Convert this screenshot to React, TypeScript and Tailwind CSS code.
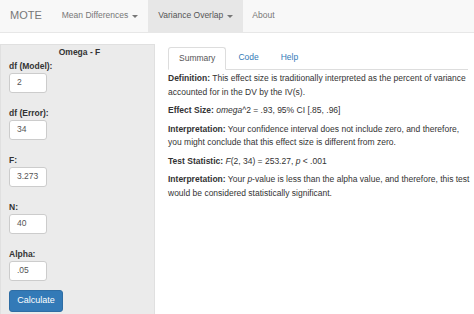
const fields = [
  { label: 'df (Model):', value: '2' },
  { label: 'df (Error):', value: '34' },
  { label: 'F:', value: '3.273' },
  { label: 'N:', value: '40' },
  { label: 'Alpha:', value: '.05' },
];

function Caret() {
  return (
    <span className="ml-[4px] inline-block h-0 w-0 border-x-[3px] border-t-[3px] border-x-transparent border-t-[#777] align-middle" />
  );
}

export default function App() {
  return (
    <div className="h-[314px] w-[474px] overflow-hidden bg-white text-[8.5px] leading-[13.5px] text-[#333] [font-family:'Liberation_Sans',Arial,sans-serif]">
      {/* Navbar */}
      <nav className="flex h-[33px] items-stretch border-b border-[#e7e7e7] bg-[#f8f8f8] text-[#777]">
        <div className="flex items-center pl-[10px] pr-[10px] text-[11px]">MOTE</div>
        <div className="flex items-center px-[10px]">
          Mean Differences
          <Caret />
        </div>
        <div className="flex items-center bg-[#e7e7e7] px-[10px] text-[#555]">
          Variance Overlap
          <Caret />
        </div>
        <div className="flex items-center px-[9px]">About</div>
      </nav>

      <div className="mt-[11px] flex">
        {/* Sidebar */}
        <aside className="h-[280px] w-[155px] shrink-0 border border-[#e0e0e0] bg-[#ebebeb] pl-[8px]">
          <div className="pr-[4px] text-center font-bold leading-[14px]">Omega - F</div>
          <div className="flex flex-col gap-[13px]">
            {fields.map((f) => (
              <div key={f.label}>
                <div className="font-bold leading-[14px]">{f.label}</div>
                <div className="flex h-[20px] w-[38px] items-center rounded-[3px] border border-[#ccc] bg-white pl-[7px] text-[#555]">
                  {f.value}
                </div>
              </div>
            ))}
          </div>
          <button className="mt-[9px] h-[22px] w-[54px] rounded-[3px] border border-[#2e6da4] bg-[#337ab7] text-[9px] text-white">
            Calculate
          </button>
        </aside>

        {/* Main panel */}
        <main className="ml-[13px] mr-[6px] mt-[3px] flex-1">
          <div className="flex h-[23px] border-b border-[#ddd]">
            <div className="-mb-px flex items-center rounded-t-[3px] border border-[#ddd] border-b-white bg-white px-[10px] text-[#555]">
              Summary
            </div>
            <div className="ml-[2px] flex items-center px-[10px] text-[#337ab7]">Code</div>
            <div className="ml-[2px] flex items-center px-[10px] text-[#337ab7]">Help</div>
          </div>
          <div className="-mr-[4px] flex flex-col gap-[5px] pt-[2px]">
            <p>
              <b>Definition:</b> This effect size is traditionally interpreted as the percent of variance
              accounted for in the DV by the IV(s).
            </p>
            <p>
              <b>Effect Size:</b> <i>omega</i>^2 = .93, 95% CI [.85, .96]
            </p>
            <p>
              <b>Interpretation:</b> Your confidence interval does not include zero, and therefore, you might
              conclude that this effect size is different from zero.
            </p>
            <p>
              <b>Test Statistic:</b> <i>F</i>(2, 34) = 253.27, <i>p</i> &lt; .001
            </p>
            <p>
              <b>Interpretation:</b> Your <i>p</i>-value is less than the alpha value, and therefore, this test
              would be considered statistically significant.
            </p>
          </div>
        </main>
      </div>
    </div>
  );
}
